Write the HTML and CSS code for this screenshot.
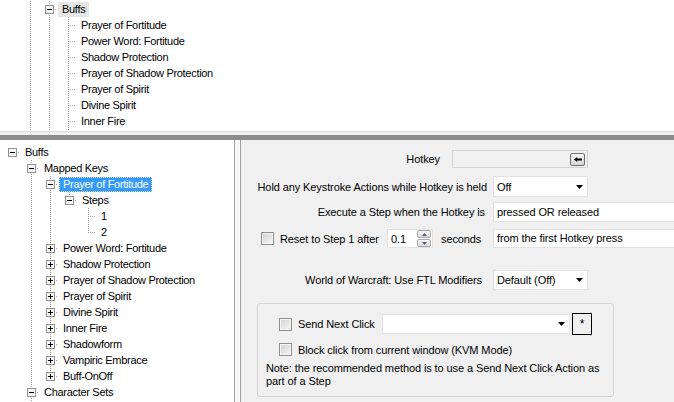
FILE: index.html
```html
<!DOCTYPE html>
<html lang="en">
<head>
  <meta charset="UTF-8" />
  <title>Key Mapping</title>
  <link rel="stylesheet" href="styles.css">
</head>
<body>
  <div class="top-tree">
    <div class="node"><span class="ind"></span><span class="ind line"></span><span class="jn tee"><svg class="exp" viewBox="0 0 9 9"><rect x="0.5" y="0.5" width="8" height="8" fill="#f7f7f7" stroke="#919191"/><path d="M2 4.5h5" stroke="#000"/></svg></span><span class="lbl inactive">Buffs</span></div>
    <div class="node"><span class="ind"></span><span class="ind line"></span><span class="ind line"></span><span class="jn tee"></span><span class="lbl">Prayer of Fortitude</span></div>
    <div class="node"><span class="ind"></span><span class="ind line"></span><span class="ind line"></span><span class="jn tee"></span><span class="lbl">Power Word: Fortitude</span></div>
    <div class="node"><span class="ind"></span><span class="ind line"></span><span class="ind line"></span><span class="jn tee"></span><span class="lbl">Shadow Protection</span></div>
    <div class="node"><span class="ind"></span><span class="ind line"></span><span class="ind line"></span><span class="jn tee"></span><span class="lbl">Prayer of Shadow Protection</span></div>
    <div class="node"><span class="ind"></span><span class="ind line"></span><span class="ind line"></span><span class="jn tee"></span><span class="lbl">Prayer of Spirit</span></div>
    <div class="node"><span class="ind"></span><span class="ind line"></span><span class="ind line"></span><span class="jn tee"></span><span class="lbl">Divine Spirit</span></div>
    <div class="node"><span class="ind"></span><span class="ind line"></span><span class="ind line"></span><span class="jn tee"></span><span class="lbl">Inner Fire</span></div>
    <div class="node"><span class="ind"></span><span class="ind line"></span><span class="ind line"></span><span class="jn tee"></span><span class="lbl"></span></div>
  </div>
  <div class="h-split"></div>

  <div class="bottom">
    <div class="tree">
      <div class="node"><span class="jn root"><svg class="exp" viewBox="0 0 9 9"><rect x="0.5" y="0.5" width="8" height="8" fill="#f7f7f7" stroke="#919191"/><path d="M2 4.5h5" stroke="#000"/></svg></span><span class="lbl">Buffs</span></div>
      <div class="node"><span class="ind"></span><span class="jn tee"><svg class="exp" viewBox="0 0 9 9"><rect x="0.5" y="0.5" width="8" height="8" fill="#f7f7f7" stroke="#919191"/><path d="M2 4.5h5" stroke="#000"/></svg></span><span class="lbl">Mapped Keys</span></div>
      <div class="node"><span class="ind"></span><span class="ind line"></span><span class="jn tee"><svg class="exp" viewBox="0 0 9 9"><rect x="0.5" y="0.5" width="8" height="8" fill="#f7f7f7" stroke="#919191"/><path d="M2 4.5h5" stroke="#000"/></svg></span><span class="lbl sel">Prayer of Fortitude</span></div>
      <div class="node"><span class="ind"></span><span class="ind line"></span><span class="ind line"></span><span class="jn elbow"><svg class="exp" viewBox="0 0 9 9"><rect x="0.5" y="0.5" width="8" height="8" fill="#f7f7f7" stroke="#919191"/><path d="M2 4.5h5" stroke="#000"/></svg></span><span class="lbl">Steps</span></div>
      <div class="node"><span class="ind"></span><span class="ind line"></span><span class="ind line"></span><span class="ind"></span><span class="jn tee"></span><span class="lbl">1</span></div>
      <div class="node"><span class="ind"></span><span class="ind line"></span><span class="ind line"></span><span class="ind"></span><span class="jn elbow"></span><span class="lbl">2</span></div>
      <div class="node"><span class="ind"></span><span class="ind line"></span><span class="jn tee"><svg class="exp" viewBox="0 0 9 9"><rect x="0.5" y="0.5" width="8" height="8" fill="#f7f7f7" stroke="#919191"/><path d="M2 4.5h5M4.5 2v5" stroke="#000"/></svg></span><span class="lbl">Power Word: Fortitude</span></div>
      <div class="node"><span class="ind"></span><span class="ind line"></span><span class="jn tee"><svg class="exp" viewBox="0 0 9 9"><rect x="0.5" y="0.5" width="8" height="8" fill="#f7f7f7" stroke="#919191"/><path d="M2 4.5h5M4.5 2v5" stroke="#000"/></svg></span><span class="lbl">Shadow Protection</span></div>
      <div class="node"><span class="ind"></span><span class="ind line"></span><span class="jn tee"><svg class="exp" viewBox="0 0 9 9"><rect x="0.5" y="0.5" width="8" height="8" fill="#f7f7f7" stroke="#919191"/><path d="M2 4.5h5M4.5 2v5" stroke="#000"/></svg></span><span class="lbl">Prayer of Shadow Protection</span></div>
      <div class="node"><span class="ind"></span><span class="ind line"></span><span class="jn tee"><svg class="exp" viewBox="0 0 9 9"><rect x="0.5" y="0.5" width="8" height="8" fill="#f7f7f7" stroke="#919191"/><path d="M2 4.5h5M4.5 2v5" stroke="#000"/></svg></span><span class="lbl">Prayer of Spirit</span></div>
      <div class="node"><span class="ind"></span><span class="ind line"></span><span class="jn tee"><svg class="exp" viewBox="0 0 9 9"><rect x="0.5" y="0.5" width="8" height="8" fill="#f7f7f7" stroke="#919191"/><path d="M2 4.5h5M4.5 2v5" stroke="#000"/></svg></span><span class="lbl">Divine Spirit</span></div>
      <div class="node"><span class="ind"></span><span class="ind line"></span><span class="jn tee"><svg class="exp" viewBox="0 0 9 9"><rect x="0.5" y="0.5" width="8" height="8" fill="#f7f7f7" stroke="#919191"/><path d="M2 4.5h5M4.5 2v5" stroke="#000"/></svg></span><span class="lbl">Inner Fire</span></div>
      <div class="node"><span class="ind"></span><span class="ind line"></span><span class="jn tee"><svg class="exp" viewBox="0 0 9 9"><rect x="0.5" y="0.5" width="8" height="8" fill="#f7f7f7" stroke="#919191"/><path d="M2 4.5h5M4.5 2v5" stroke="#000"/></svg></span><span class="lbl">Shadowform</span></div>
      <div class="node"><span class="ind"></span><span class="ind line"></span><span class="jn tee"><svg class="exp" viewBox="0 0 9 9"><rect x="0.5" y="0.5" width="8" height="8" fill="#f7f7f7" stroke="#919191"/><path d="M2 4.5h5M4.5 2v5" stroke="#000"/></svg></span><span class="lbl">Vampiric Embrace</span></div>
      <div class="node"><span class="ind"></span><span class="ind line"></span><span class="jn elbow"><svg class="exp" viewBox="0 0 9 9"><rect x="0.5" y="0.5" width="8" height="8" fill="#f7f7f7" stroke="#919191"/><path d="M2 4.5h5M4.5 2v5" stroke="#000"/></svg></span><span class="lbl">Buff-OnOff</span></div>
      <div class="node"><span class="ind"></span><span class="jn tee"><svg class="exp" viewBox="0 0 9 9"><rect x="0.5" y="0.5" width="8" height="8" fill="#f7f7f7" stroke="#919191"/><path d="M2 4.5h5" stroke="#000"/></svg></span><span class="lbl">Character Sets</span></div>
      <div class="node"><span class="ind"></span><span class="ind line"></span></div>
    </div>

    <div class="v-split"></div>

    <div class="panel">
      <div class="frow hk">
        <span class="lab">Hotkey</span>
        <div class="hotkey">
          <span class="bksp"><svg width="8" height="5" viewBox="0 0 8 5"><path d="M0 2.5L3.2 0v1.6H8v1.8H3.2V5z" fill="#000"/></svg></span>
        </div>
      </div>

      <div class="frow hold">
        <span class="lab">Hold any Keystroke Actions while Hotkey is held</span>
        <div class="combo"><span>Off</span><svg width="7" height="4" viewBox="0 0 7 4"><path d="M0 0h7L3.5 4z" fill="#000"/></svg></div>
      </div>

      <div class="frow exec">
        <span class="lab">Execute a Step when the Hotkey is</span>
        <div class="field">pressed OR released</div>
      </div>

      <div class="frow reset">
        <div class="reset-left">
          <span class="chk"></span>
          <span class="reset-txt">Reset to Step 1 after</span>
          <div class="spin">
            <span>0.1</span>
            <div class="spin-btns">
              <span class="sb"><svg width="5" height="3" viewBox="0 0 5 3"><path d="M0 3L2.5 0L5 3z" fill="#4e5f7c"/></svg></span>
              <span class="sb"><svg width="5" height="3" viewBox="0 0 5 3"><path d="M0 0h5L2.5 3z" fill="#4e5f7c"/></svg></span>
            </div>
          </div>
          <span class="secs">seconds</span>
        </div>
        <div class="field">from the first Hotkey press</div>
      </div>

      <div class="frow wow">
        <span class="lab">World of Warcraft: Use FTL Modifiers</span>
        <div class="combo"><span>Default (Off)</span><svg width="7" height="4" viewBox="0 0 7 4"><path d="M0 0h7L3.5 4z" fill="#000"/></svg></div>
      </div>

      <div class="group">
        <div class="g-row">
          <span class="chk"></span>
          <span class="g-txt">Send Next Click</span>
          <div class="combo wide"><span></span><svg width="7" height="4" viewBox="0 0 7 4"><path d="M0 0h7L3.5 4z" fill="#000"/></svg></div>
          <span class="star">*</span>
        </div>
        <div class="g-row second">
          <span class="chk"></span>
          <span class="g-txt">Block click from current window (KVM Mode)</span>
        </div>
        <p class="note">Note: the recommended method is to use a Send Next Click Action as part of a Step</p>
      </div>
    </div>
  </div>
</body>
</html>
```

FILE: styles.css
```css
:root {
  --vdot: repeating-linear-gradient(to bottom, #a0a0a0 0 1px, transparent 1px 2px);
  --hdot: repeating-linear-gradient(to right, #a0a0a0 0 1px, transparent 1px 2px);
}

* {
  box-sizing: border-box;
}

body {
  margin: 0;
  width: 674px;
  height: 402px;
  overflow: hidden;
  font-family: "Liberation Sans", Arial, sans-serif;
  font-size: 11px;
  letter-spacing: -0.3px;
  color: #000;
  background: #f0f0f0;
}

/* tree views */
.top-tree {
  height: 132px;
  padding-top: 1px;
  margin-left: -1px;
  background: #fff;
  border-bottom: 1px solid #dcdcdc;
  overflow: hidden;
}

.h-split {
  height: 3px;
  background: #f0f0f0;
}

.bottom {
  display: flex;
  height: 267px;
  border-top: 5px solid #8c8c8c;
}

.tree {
  width: 235px;
  flex: none;
  padding-top: 4px;
  background: #fff;
  border-right: 1px solid #a0a0a0;
  overflow: hidden;
}

.node {
  display: flex;
  height: 16px;
  white-space: nowrap;
}

.ind, .jn {
  width: 19px;
  height: 16px;
  flex: none;
  background-repeat: no-repeat;
}

.line {
  background-image: var(--vdot);
  background-size: 1px 16px;
  background-position: 12px 0;
}

.tee {
  background-image: var(--vdot), var(--hdot);
  background-size: 1px 16px, 7px 1px;
  background-position: 12px 0, 12px 8px;
}

.elbow {
  background-image: var(--vdot), var(--hdot);
  background-size: 1px 9px, 7px 1px;
  background-position: 12px 0, 12px 8px;
}

.root {
  background-image: var(--hdot);
  background-size: 7px 1px;
  background-position: 12px 8px;
}

.exp {
  display: block;
  width: 9px;
  height: 9px;
  margin: 4px 0 0 8px;
}

.lbl {
  height: 15px;
  margin: 1px 0 0 2px;
  padding: 0 3px;
  line-height: 13px;
  border: 1px solid transparent;
}

.lbl.sel {
  background: #3399ff;
  color: #fff;
  border: 1px dotted #f5d59a;
}

.lbl.inactive {
  background: #e6e6e6;
}

.v-split {
  width: 5px;
  flex: none;
  background: #f8f8f8;
}

/* settings panel */
.panel {
  flex: 1;
  padding-top: 10px;
  border-left: 1px solid #a0a0a0;
  letter-spacing: -0.1px;
  overflow: hidden;
}

.frow {
  display: grid;
  grid-template-columns: 246px 1fr;
  column-gap: 6px;
  align-items: center;
}

.lab {
  text-align: right;
  white-space: nowrap;
}

.hk {
  grid-template-columns: 199px 136px;
  column-gap: 12px;
  height: 18px;
}

.hold {
  margin-top: 8px;
  height: 21px;
}

.exec {
  margin-top: 5px;
  height: 20px;
}

.exec .lab {
  padding-right: 2px;
}

.reset {
  margin-top: 7px;
  height: 19px;
}

.wow {
  margin-top: 22px;
  height: 20px;
}

.wow .lab {
  padding-right: 5px;
}

.hotkey {
  display: flex;
  justify-content: flex-end;
  align-items: center;
  height: 18px;
  padding-right: 2px;
  background: #f0f0f0;
  border: 1px solid #d4d4d4;
}

.bksp {
  display: flex;
  align-items: center;
  justify-content: center;
  width: 15px;
  height: 13px;
  border: 1px solid #6f6f6f;
  border-radius: 2px;
  background: linear-gradient(#f7f7f7, #d6d6d6);
}

.combo {
  display: flex;
  align-items: center;
  justify-content: space-between;
  width: 95px;
  height: 100%;
  padding: 0 4px 0 3px;
  background: #fff;
  border: 1px solid #e2e2e2;
}

.field {
  height: 100%;
  margin-right: -4px;
  padding-left: 3px;
  line-height: 18px;
  background: #fff;
  border: 1px solid #e2e2e2;
  white-space: nowrap;
}

.reset .field {
  line-height: 17px;
}

.chk {
  width: 13px;
  height: 13px;
  flex: none;
  border: 1px solid #8e8f8f;
  box-shadow: inset 0 0 0 1px #f4f4f4;
  background: linear-gradient(135deg, #d2d2d2, #f6f6f6);
}

.reset-left {
  display: flex;
  align-items: center;
  padding-left: 20px;
  height: 19px;
}

.reset-txt {
  width: 107px;
  flex: none;
  margin-left: 6px;
  white-space: nowrap;
}

.spin {
  display: flex;
  align-items: center;
  justify-content: space-between;
  width: 46px;
  height: 19px;
  flex: none;
  padding: 0 1px 0 3px;
  background: #fff;
  border: 1px solid #e2e2e2;
}

.spin-btns {
  display: flex;
  flex-direction: column;
  gap: 1px;
}

.sb {
  display: flex;
  align-items: center;
  justify-content: center;
  width: 14px;
  height: 8px;
  border: 1px solid #a9a9a9;
  border-radius: 2px;
  background: linear-gradient(#f5f5f5, #dcdcdc);
}

.secs {
  margin-left: 8px;
}

.group {
  width: 357px;
  height: 94px;
  margin: 13px 0 0 16px;
  padding: 9px 12px 0 8px;
  border: 1px solid #d5d5d5;
  border-radius: 3px;
}

.g-row {
  display: flex;
  align-items: center;
  height: 22px;
  padding-left: 13px;
}

.g-row.second {
  height: 13px;
  margin-top: 8px;
}

.g-txt {
  margin-left: 6px;
  white-space: nowrap;
}

.g-row .g-txt:not(:last-child) {
  width: 84px;
  flex: none;
}

.combo.wide {
  width: 188px;
  height: 20px;
}

.star {
  display: flex;
  align-items: center;
  justify-content: center;
  width: 20px;
  height: 22px;
  margin-left: 2px;
  border: 1px solid #000;
  background: #f0f0f0;
  font-size: 12px;
}

.note {
  margin: 6px 0 0;
  line-height: 13px;
}
```
